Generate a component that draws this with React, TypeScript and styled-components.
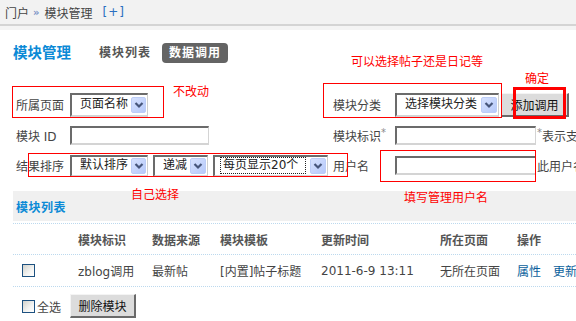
import React from 'react';
import styled, { createGlobalStyle } from 'styled-components';

const Global = createGlobalStyle`
  html, body { margin: 0; padding: 0; background: #fff; }
  body {
    font-family: "DejaVu Sans", "Noto Sans CJK SC", sans-serif;
    font-size: 12px;
    color: #444;
  }
`;

const Page = styled.div`
  position: relative;
  width: 576px;
  height: 321px;
  overflow: hidden;
  background: #fff;
`;

const TopBar = styled.div`
  height: 24px;
  background: #f2f2f2;
  border-bottom: 2px solid #d4d4d4;
  display: flex;
  align-items: center;
  padding-left: 5px;
  color: #444;
  white-space: nowrap;
`;

const TopShade = styled.div`
  height: 4px;
  background: #f4f4f4;
`;

const Crumb = styled.span<{ $gap?: number }>`
  margin-left: ${p => p.$gap ?? 0}px;
`;

const Raquo = styled.span`
  margin-left: 4px;
  color: #7b93c6;
  font-size: 10px;
  font-weight: 700;
`;

const AddLink = styled.span`
  margin-left: 10px;
  color: #2a6fc0;
  letter-spacing: 1px;
`;

const Header = styled.div`
  margin-top: 13px;
  height: 20px;
  padding-left: 13px;
  display: flex;
  align-items: center;
`;

const Title = styled.h1`
  margin: 0 28px 0 0;
  font-size: 14.5px;
  font-weight: 700;
  color: #0b8ad6;
  line-height: 20px;
`;

const Tab = styled.span<{ $active?: boolean }>`
  height: 20px;
  line-height: 20px;
  padding: 0 ${p => (p.$active ? 7 : 0)}px;
  margin-right: ${p => (p.$active ? 0 : 11)}px;
  border-radius: 4px;
  font-weight: 700;
  letter-spacing: 1px;
  background: ${p => (p.$active ? '#646464' : 'transparent')};
  color: ${p => (p.$active ? '#fff' : '#555')};
`;

const Form = styled.div`
  margin-top: 29px;
  padding-left: 16px;
  display: grid;
  grid-template-columns: 54px 263px 62px 1fr;
  grid-template-rows: 25px 24px 25px;
  row-gap: 6px;
  align-items: center;
  white-space: nowrap;
`;

const Label = styled.span`
  color: #444;
`;

const Star = styled.span`
  color: #8a8a8a;
  font-size: 10px;
  vertical-align: top;
`;

const Controls = styled.div`
  display: flex;
  align-items: center;
  gap: 5px;
`;

const Select = styled.div<{ $w: number; $h: number }>`
  box-sizing: border-box;
  width: ${p => p.$w}px;
  height: ${p => p.$h}px;
  display: flex;
  align-items: center;
  justify-content: space-between;
  padding: 0 1px 0 5px;
  background: #fff;
  border-style: solid;
  border-width: 2px 1px 2px 2px;
  border-color: #6b6b6b #cfcfcf #d4d4d4 #6b6b6b;
  color: #222;
`;

const SelectText = styled.span<{ $focus?: boolean }>`
  padding: 0 2px;
  line-height: 15px;
  border: 1px dotted ${p => (p.$focus ? '#222' : 'transparent')};
  flex: ${p => (p.$focus ? 1 : 'none')};
  margin-right: ${p => (p.$focus ? 4 : 0)}px;
`;

const ArrowBox = styled.span`
  box-sizing: border-box;
  width: 16px;
  height: 16px;
  border-radius: 2px;
  border: 1px solid #bccdf7;
  background: linear-gradient(135deg, #d6e1fe 0%, #b6c9fa 100%);
  display: flex;
  align-items: center;
  justify-content: center;
`;

const Input = styled.div<{ $w: number }>`
  box-sizing: border-box;
  width: ${p => p.$w}px;
  height: 19px;
  background: #fff;
  border-style: solid;
  border-width: 2px 1px 2px 2px;
  border-color: #6b6b6b #d4d4d4 #d4d4d4 #6b6b6b;
`;

const Trail = styled.span`
  color: #444;
  margin-left: 1px;
`;

const Button = styled.button<{ $w: number }>`
  box-sizing: border-box;
  width: ${p => p.$w}px;
  height: 24px;
  padding: 0;
  font: inherit;
  color: #111;
  background: #dcdcdc;
  border-style: solid;
  border-width: 1px 2px 2px 1px;
  border-color: #f4f4f4 #6a6a6a #6a6a6a #f4f4f4;
  cursor: default;
`;

const Band = styled.div`
  margin: 13px 0 0 13px;
  height: 30px;
  background: #f0f0f0;
  display: flex;
  align-items: center;
  padding-left: 3px;
  color: #0b8ad6;
  font-weight: 700;
  letter-spacing: 0.5px;
`;

const Table = styled.div`
  margin: 2px 0 0 13px;
  border-top: 1px dotted #bcd9ee;
`;

const Row = styled.div<{ $head?: boolean }>`
  display: grid;
  grid-template-columns: 65px 74px 68px 101px 119px 77px 1fr;
  height: ${p => (p.$head ? 30 : 31)}px;
  align-items: center;
  border-bottom: 1px dotted #bcd9ee;
  white-space: nowrap;
  font-weight: ${p => (p.$head ? 700 : 400)};
  color: ${p => (p.$head ? '#555' : '#444')};
`;

const CheckCell = styled.div`
  padding-left: 9px;
  display: flex;
  align-items: center;
`;

const Check = styled.span`
  box-sizing: border-box;
  display: inline-block;
  width: 13px;
  height: 13px;
  border: 1px solid #1d5180;
  background: linear-gradient(135deg, #d2d2cc 0%, #f4f4f2 60%, #ffffff 100%);
`;

const Links = styled.div`
  display: flex;
  gap: 12px;
`;

const Link = styled.a`
  color: #0b5f9c;
  text-decoration: none;
`;

const Footer = styled.div`
  padding: 7px 0 0 22px;
  display: flex;
  align-items: center;
`;

const FooterLabel = styled.span`
  margin: 0 9px 0 2px;
  color: #444;
`;

const Box = styled.div<{ $x: number; $y: number; $w: number; $h: number; $t?: number }>`
  position: absolute;
  left: ${p => p.$x}px;
  top: ${p => p.$y}px;
  width: ${p => p.$w}px;
  height: ${p => p.$h}px;
  box-sizing: border-box;
  border: ${p => p.$t ?? 1}px solid #ff0000;
  pointer-events: none;
`;

const Note = styled.span<{ $x: number; $y: number }>`
  position: absolute;
  left: ${p => p.$x}px;
  top: ${p => p.$y}px;
  color: #ff0000;
  font-family: "Noto Sans CJK SC", sans-serif;
  font-size: 12px;
  line-height: 12px;
  white-space: nowrap;
`;

const Arrow = () => (
  <ArrowBox>
    <svg width="10" height="8" viewBox="0 0 10 8">
      <path d="M1.5 2 L5 5.5 L8.5 2" fill="none" stroke="#46557a" strokeWidth="2.2" />
    </svg>
  </ArrowBox>
);

const Dropdown = ({ w, h, text, focus }: { w: number; h: number; text: string; focus?: boolean }) => (
  <Select $w={w} $h={h}>
    <SelectText $focus={focus}>{text}</SelectText>
    <Arrow />
  </Select>
);

export default function App() {
  return (
    <Page>
      <Global />
      <TopBar>
        <Crumb>门户</Crumb>
        <Raquo>»</Raquo>
        <Crumb $gap={5}>模块管理</Crumb>
        <AddLink>[+]</AddLink>
      </TopBar>
      <TopShade />

      <Header>
        <Title>模块管理</Title>
        <Tab>模块列表</Tab>
        <Tab $active>数据调用</Tab>
      </Header>

      <Form>
        <Label>所属页面</Label>
        <Controls>
          <Dropdown w={78} h={24} text="页面名称" />
        </Controls>
        <Label>模块分类</Label>
        <Controls style={{ gap: 2 }}>
          <Dropdown w={104} h={24} text="选择模块分类" />
          <Button $w={68}>添加调用</Button>
        </Controls>

        <Label>模块 ID</Label>
        <Controls>
          <Input $w={139} />
        </Controls>
        <Label>
          模块标识<Star>*</Star>
        </Label>
        <Controls style={{ gap: 0 }}>
          <Input $w={141} />
          <Trail>
            <Star>*</Star>表示支持调用
          </Trail>
        </Controls>

        <Label>结果排序</Label>
        <Controls>
          <Dropdown w={78} h={22} text="默认排序" />
          <Dropdown w={55} h={22} text="递减" />
          <Dropdown w={115} h={22} text="每页显示20个" focus />
        </Controls>
        <Label>用户名</Label>
        <Controls style={{ gap: 0 }}>
          <Input $w={141} />
          <Trail>此用户名不存在</Trail>
        </Controls>
      </Form>

      <Band>模块列表</Band>

      <Table>
        <Row $head>
          <div />
          <div>模块标识</div>
          <div>数据来源</div>
          <div>模块模板</div>
          <div>更新时间</div>
          <div>所在页面</div>
          <div>操作</div>
        </Row>
        <Row>
          <CheckCell>
            <Check />
          </CheckCell>
          <div>zblog调用</div>
          <div>最新帖</div>
          <div>[内置]帖子标题</div>
          <div>2011-6-9 13:11</div>
          <div>无所在页面</div>
          <Links>
            <Link>属性</Link>
            <Link>更新</Link>
          </Links>
        </Row>
      </Table>

      <Footer>
        <Check />
        <FooterLabel>全选</FooterLabel>
        <Button $w={66}>删除模块</Button>
      </Footer>

      <Box $x={12} $y={86} $w={152} $h={32} />
      <Note $x={173} $y={85}>不改动</Note>
      <Note $x={351} $y={55}>可以选择帖子还是日记等</Note>
      <Note $x={525} $y={72}>确定</Note>
      <Box $x={323} $y={83} $w={179} $h={35} />
      <Box $x={513} $y={87} $w={53} $h={32} $t={3} />
      <Box $x={28} $y={153} $w={320} $h={24} />
      <Box $x={380} $y={150} $w={156} $h={32} />
      <Note $x={131} $y={188}>自己选择</Note>
      <Note $x={404} $y={191}>填写管理用户名</Note>
    </Page>
  );
}
